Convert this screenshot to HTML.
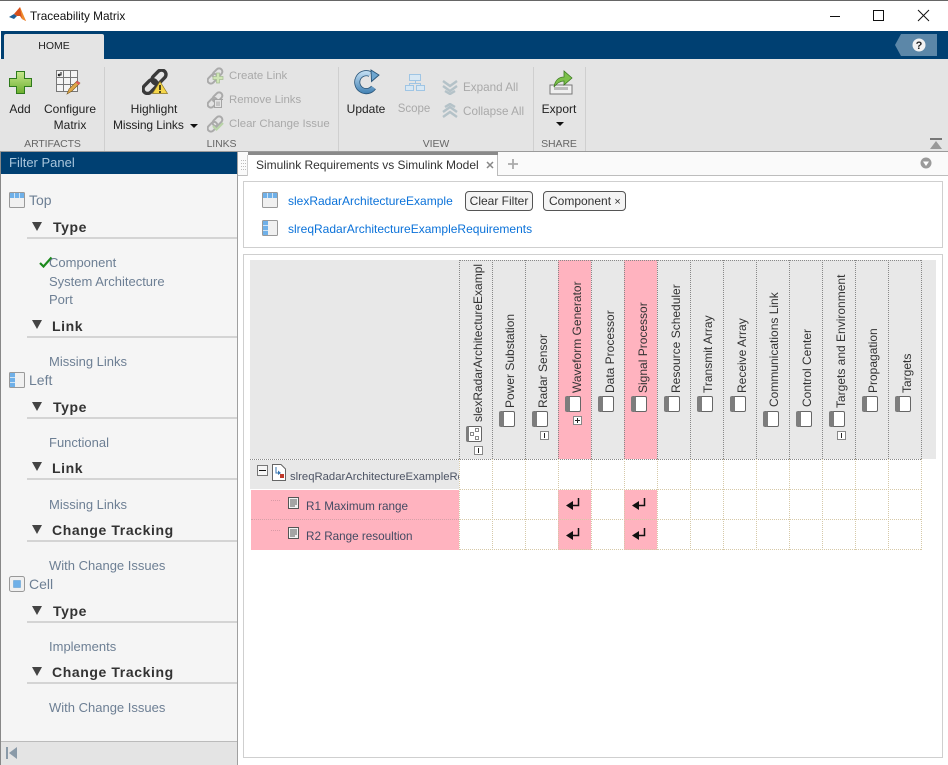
<!DOCTYPE html>
<html><head><meta charset="utf-8"><title>Traceability Matrix</title>
<style>
html,body{margin:0;padding:0;width:948px;height:765px;overflow:hidden;background:#fff}
body{position:relative;font-family:"Liberation Sans",sans-serif;font-size:12px;color:#222}
.a,.t,.v,.f,.h,.l{position:absolute}
.t{white-space:nowrap;line-height:16px}
.c{transform:translateX(-50%)}
.g{color:#a9a9a9;font-size:11.400px}
.sec{color:#666;font-size:10.500px;letter-spacing:-.1px}
.f{color:#6d7f94;font-size:13px;line-height:16px;white-space:nowrap}
.m{font-size:14px}
.h{color:#333;font-size:14px;font-weight:bold;line-height:16px;letter-spacing:.6px;white-space:nowrap}
.tri{position:absolute;left:32px;width:0;height:0;border-left:5px solid transparent;border-right:5px solid transparent;border-top:9px solid #444}
.rule{position:absolute;left:27px;width:210px;height:2px;background:#d4d4d4}
.l{color:#0b72d9;font-size:12px;line-height:16px;white-space:nowrap}
.v{white-space:nowrap;font-size:12px;line-height:14px;color:#333;transform-origin:0 0;transform:rotate(-90deg)}
.colh{position:absolute;top:260px;height:199px;width:32px;border-left:1px dotted #888}
.vl{position:absolute;width:0;top:459px;height:91px;border-left:1px dotted #d6c9a8}
.hl{position:absolute;left:459px;width:462px;height:0;border-top:1px dotted #d6c9a8}
.pink{position:absolute;background:#ffb3bf}
.cmp{position:absolute;width:16px;height:16px;border:1px solid #666;border-left:5px solid #7d7d7d;border-radius:2px;background:#fff;box-sizing:border-box}
.pm{position:absolute;width:9px;height:9px;border:1px solid #888;background:#fff;box-sizing:border-box}
.pm:after{content:"";position:absolute;left:3px;top:1px;width:1px;height:5px;background:#222}
</style></head><body>

<!-- Title bar -->
<div class="a" style="left:0;top:0;width:948px;height:1px;background:#666"></div>
<svg class="a" style="left:9px;top:7px" width="17" height="17" viewBox="0 0 17 17"><path d="M0 10L5 7L8 9L5 12Z" fill="#1f5f96"/><path d="M5 7L11 0L14 8L17 14L13 12L11 9L8 9Z" fill="#d8501c"/><path d="M11 0L17 14L13 12Z" fill="#ee8a2c"/></svg>
<div class="t" style="left:30px;top:8px;font-size:11.800px;color:#111">Traceability Matrix</div>
<svg class="a" style="left:830px;top:9px" width="110" height="16" viewBox="0 0 110 16" fill="none" stroke="#111" stroke-width="1"><path d="M0 7.500H10"/><rect x="43.500" y="1.500" width="10" height="10"/><path d="M88 1L99 12M99 1L88 12"/></svg>

<!-- Blue band + ribbon -->
<div class="a" style="left:1px;top:31px;width:947px;height:28px;background:#004072"></div>
<div class="a" style="left:4px;top:34px;width:100px;height:25px;background:#e4e4e4;border-radius:2px 2px 0 0"></div>
<div class="t c" style="left:54px;top:38px;font-size:10.500px;color:#222">HOME</div>
<svg class="a" style="left:895px;top:34px" width="42" height="22" viewBox="0 0 42 22"><path d="M6 0H42V22H6L0 11Z" fill="#5c87a8"/><circle cx="24" cy="11" r="6.500" fill="#f2f2f2"/><text x="24" y="15" font-family="Liberation Sans" font-size="11" font-weight="bold" text-anchor="middle" fill="#222">?</text></svg>

<div class="a" style="left:0;top:59px;width:948px;height:92px;background:#e4e4e4"></div>
<div class="a" style="left:104px;top:67px;width:1px;height:84px;background:#cfcfcf"></div>
<div class="a" style="left:338px;top:67px;width:1px;height:84px;background:#cfcfcf"></div>
<div class="a" style="left:533px;top:67px;width:1px;height:84px;background:#cfcfcf"></div>
<div class="a" style="left:585px;top:67px;width:1px;height:84px;background:#cfcfcf"></div>

<svg class="a" style="left:9px;top:71px" width="23" height="23" viewBox="0 0 23 23"><defs><linearGradient id="gr" x1="0" y1="0" x2="0" y2="1"><stop offset="0" stop-color="#c9e88e"/><stop offset="1" stop-color="#6cae2e"/></linearGradient></defs><path d="M7.500.5H15.500V7.500H22.500V15.500H15.500V22.500H7.500V15.500H.5V7.500H7.500Z" fill="url(#gr)" stroke="#2f7a1c"/></svg>
<svg class="a" style="left:55px;top:69px" width="26" height="26" viewBox="0 0 26 26"><rect x="1.500" y="1.500" width="21" height="21" fill="#f4f4f4" stroke="#777"/><path d="M8.500 1V22M15.500 1V22M1 8.500H22M1 15.500H22" stroke="#777"/><path d="M6 3V6H3M3 6L4.500 4.800M3 6L4.500 7.200" stroke="#111" fill="none"/><path d="M12 25L14 20L22 12L25 14L17 22Z" fill="#e0a848" stroke="#7a5a20" stroke-width=".6"/><path d="M22 12L25 14L24 16L20.500 13.500Z" fill="#e05a5a"/></svg>
<div class="t c" style="left:20px;top:101px">Add</div>
<div class="t c" style="left:70px;top:101px">Configure</div>
<div class="t c" style="left:70px;top:117px">Matrix</div>
<div class="t c sec" style="left:52.500px;top:136px">ARTIFACTS</div>

<svg class="a" style="left:142px;top:69px" width="28" height="26" viewBox="0 0 28 26" fill="none"><rect x="0" y="13" width="16" height="9" rx="4.500" stroke="#3a3a3a" stroke-width="3.400" transform="rotate(-45 8 17.500)"/><rect x="9" y="3.500" width="16" height="9" rx="4.500" stroke="#3a3a3a" stroke-width="3.400" transform="rotate(-45 17 8)"/><path d="M18 12.500L25.500 24.500H10.500Z" fill="#f5d64a" stroke="#8a7420" stroke-width=".7"/><path d="M18 16V21M18 22V24" stroke="#111" stroke-width="1.500"/></svg>
<div class="t c" style="left:154px;top:101px">Highlight</div>
<div class="t" style="left:113px;top:117px;letter-spacing:-.1px">Missing Links</div>
<div class="a" style="left:190px;top:124px;width:0;height:0;border-left:4px solid transparent;border-right:4px solid transparent;border-top:4px solid #111"></div>

<svg class="a" style="left:207px;top:67px" width="20" height="18" viewBox="0 0 20 18" fill="none"><rect x="0" y="8.500" width="11" height="6.500" rx="3.200" stroke="#aaa" stroke-width="2" transform="rotate(-45 5.500 11.750)"/><rect x="5" y="3" width="11" height="6.500" rx="3.200" stroke="#aaa" stroke-width="2" transform="rotate(-45 10.500 6.250)"/><path d="M9.500 6H12.500V9.500H16V12.500H12.500V16H9.500V12.500H6V9.500H9.500Z" fill="#cfe6b5" stroke="#a5bb92" stroke-width=".7"/></svg>
<svg class="a" style="left:207px;top:91px" width="20" height="18" viewBox="0 0 20 18" fill="none"><rect x="0" y="8.500" width="11" height="6.500" rx="3.200" stroke="#aaa" stroke-width="2" transform="rotate(-45 5.500 11.750)"/><rect x="5" y="3" width="11" height="6.500" rx="3.200" stroke="#aaa" stroke-width="2" transform="rotate(-45 10.500 6.250)"/><path d="M7 8.500H15V16.500H7Z" fill="#e4e4e4"/><path d="M6 8.500H16M7.500 9V16.500H14.500V9M10 10.500V15M12 10.500V15" stroke="#a5a5a5"/></svg>
<svg class="a" style="left:207px;top:115px" width="20" height="18" viewBox="0 0 20 18" fill="none"><rect x="0" y="8.500" width="11" height="6.500" rx="3.200" stroke="#aaa" stroke-width="2" transform="rotate(-45 5.500 11.750)"/><rect x="5" y="3" width="11" height="6.500" rx="3.200" stroke="#aaa" stroke-width="2" transform="rotate(-45 10.500 6.250)"/><path d="M6 11L9.500 14.500L16 8" stroke="#b9d4a8" stroke-width="2.200"/></svg>
<div class="t g" style="left:229px;top:68px">Create Link</div>
<div class="t g" style="left:229px;top:92px">Remove Links</div>
<div class="t g" style="left:229px;top:116px">Clear Change Issue</div>
<div class="t c sec" style="left:221.500px;top:136px">LINKS</div>

<svg class="a" style="left:354px;top:69px" width="26" height="26" viewBox="0 0 26 26" fill="none"><defs><linearGradient id="bl" gradientUnits="userSpaceOnUse" x1="0" y1="2" x2="0" y2="25"><stop offset="0" stop-color="#c4e0f4"/><stop offset="1" stop-color="#3f7fb2"/></linearGradient></defs><path d="M19.500 18.500A9 9 0 1 1 16 5" stroke="#2a5578" stroke-width="6"/><path d="M19.500 18.500A9 9 0 1 1 16 5" stroke="url(#bl)" stroke-width="4.400"/><path d="M17 1L25 6L17.500 12.500Z" fill="#6ea6d0" stroke="#2a5578" stroke-width=".9"/></svg>
<div class="t c" style="left:366px;top:101px">Update</div>
<svg class="a" style="left:404px;top:73px" width="24" height="20" viewBox="0 0 24 20" fill="#d8e8f4" stroke="#9fc5e4"><rect x="5.500" y="1.500" width="11" height="6"/><rect x="1.500" y="12.500" width="8" height="5"/><rect x="12.500" y="12.500" width="8" height="5"/><path d="M11.500 7.500V10.500M5.500 12.500V10.500H16.500V12.500" fill="none"/></svg>
<div class="t c g" style="left:414px;top:101px;font-size:11.500px">Scope</div>
<svg class="a" style="left:441px;top:79px" width="18" height="16" viewBox="0 0 18 16" fill="none" stroke="#b4c2c8" stroke-width="2.400"><path d="M2 2L9 7L16 2M2 7L9 12L16 7M4 12L9 15L14 12"/></svg>
<svg class="a" style="left:441px;top:103px" width="18" height="16" viewBox="0 0 18 16" fill="none" stroke="#b4c2c8" stroke-width="2.400"><path d="M2 14L9 9L16 14M2 9L9 4L16 9M4 4L9 1L14 4"/></svg>
<div class="t g" style="left:463px;top:80px;font-size:11.700px">Expand All</div>
<div class="t g" style="left:463px;top:104px;font-size:11.700px">Collapse All</div>
<div class="t c sec" style="left:436px;top:136px">VIEW</div>

<svg class="a" style="left:548px;top:69px" width="26" height="26" viewBox="0 0 26 26"><path d="M2 16H24V25H2Z" fill="#f0f0f0" stroke="#777"/><rect x="6" y="18" width="14" height="3" fill="#bbb"/><path d="M6 18C7 11 11 8 16 8V2L24 9L16 16V12C12 12 9 14 6 18Z" fill="#7cc04a" stroke="#3d7a22" stroke-width=".8"/></svg>
<div class="t c" style="left:559px;top:101px">Export</div>
<div class="a" style="left:556px;top:122px;width:0;height:0;border-left:4px solid transparent;border-right:4px solid transparent;border-top:4px solid #111"></div>
<div class="t c sec" style="left:559px;top:136px">SHARE</div>
<svg class="a" style="left:929px;top:138px" width="14" height="11" viewBox="0 0 14 11"><rect x="1" y="0" width="12" height="2" fill="#777"/><path d="M7 3L13 11H1Z" fill="#999"/></svg>
<div class="a" style="left:0;top:151px;width:948px;height:1px;background:#9a9a9a"></div>

<!-- Filter panel -->
<div class="a" style="left:0;top:152px;width:1px;height:613px;background:#888"></div>
<div class="a" style="left:1px;top:152px;width:237px;height:22px;background:#004072"></div>
<div class="t" style="left:9px;top:155px;font-size:13px;color:#a9c6dc">Filter Panel</div>
<div class="a" style="left:1px;top:174px;width:236px;height:567px;background:#f5f5f5"></div>
<div class="a" style="left:237px;top:152px;width:1px;height:613px;background:#a0a0a0"></div>
<div class="a" style="left:1px;top:741px;width:236px;height:24px;background:#e4e4e4;border-top:1px solid #bbb;box-sizing:border-box"></div>
<svg class="a" style="left:6px;top:747px" width="12" height="13" viewBox="0 0 12 13"><rect x="0" y="0" width="2" height="12" fill="#8a9aa8"/><path d="M11 0V12L3 6Z" fill="#8a9aa8"/></svg>

<svg class="a" style="left:9px;top:192px" width="16" height="16" viewBox="0 0 16 16"><rect x=".5" y=".5" width="15" height="15" rx="1" fill="#f0f0f0" stroke="#999"/><rect x="1" y="1" width="14" height="5" fill="#6fb0e8"/><path d="M5.500 1V6M10.500 1V6" stroke="#cfe4f6"/></svg>
<div class="f m" style="left:29px;top:192px">Top</div>
<div class="tri" style="top:222px"></div><div class="h" style="left:53px;top:219px">Type</div><div class="rule" style="top:237px"></div>
<svg class="a" style="left:39px;top:256px" width="14" height="12" viewBox="0 0 14 12" fill="none"><path d="M1 7L4.500 10.500L12.500 1.500" stroke="#1c8a1c" stroke-width="2.200"/></svg>
<div class="f" style="left:49px;top:255px">Component</div>
<div class="f" style="left:49px;top:274px">System Architecture</div>
<div class="f" style="left:49px;top:292px">Port</div>
<div class="tri" style="top:320px"></div><div class="h" style="left:52px;top:318px">Link</div><div class="rule" style="top:336px"></div>
<div class="f" style="left:49px;top:354px">Missing Links</div>

<svg class="a" style="left:9px;top:372px" width="16" height="16" viewBox="0 0 16 16"><rect x=".5" y=".5" width="15" height="15" rx="1" fill="#f0f0f0" stroke="#999"/><rect x="1" y="1" width="5" height="14" fill="#6fb0e8"/><path d="M1 5.500H6M1 10.500H6" stroke="#cfe4f6"/></svg>
<div class="f m" style="left:29px;top:372px">Left</div>
<div class="tri" style="top:402px"></div><div class="h" style="left:53px;top:399px">Type</div><div class="rule" style="top:417px"></div>
<div class="f" style="left:49px;top:435px">Functional</div>
<div class="tri" style="top:462px"></div><div class="h" style="left:52px;top:460px">Link</div><div class="rule" style="top:478px"></div>
<div class="f" style="left:49px;top:497px">Missing Links</div>
<div class="tri" style="top:525px"></div><div class="h" style="left:52px;top:522px">Change Tracking</div><div class="rule" style="top:540px"></div>
<div class="f" style="left:49px;top:558px">With Change Issues</div>

<svg class="a" style="left:9px;top:576px" width="16" height="16" viewBox="0 0 16 16"><rect x=".5" y=".5" width="15" height="15" rx="2" fill="#f0f0f0" stroke="#999"/><rect x="4.500" y="4.500" width="7" height="7" fill="#6fb0e8" stroke="#5a9ad0" stroke-width=".5"/></svg>
<div class="f m" style="left:29px;top:576px">Cell</div>
<div class="tri" style="top:606px"></div><div class="h" style="left:53px;top:603px">Type</div><div class="rule" style="top:621px"></div>
<div class="f" style="left:49px;top:639px">Implements</div>
<div class="tri" style="top:667px"></div><div class="h" style="left:52px;top:664px">Change Tracking</div><div class="rule" style="top:682px"></div>
<div class="f" style="left:49px;top:700px">With Change Issues</div>

<!-- Tab strip -->
<div class="a" style="left:238px;top:152px;width:710px;height:23px;background:#fafafa"></div>
<div class="a" style="left:238px;top:175px;width:710px;height:1px;background:#bdbdbd"></div>
<svg class="a" style="left:240px;top:159px" width="7" height="14"><path d="M1 1.500H6M1 4.500H6M1 7.500H6M1 10.500H6" stroke="#bbb" stroke-dasharray="1 1"/></svg>
<div class="a" style="left:248px;top:152px;width:250px;height:3px;background:#8a8a8a"></div>
<div class="a" style="left:247px;top:155px;width:251px;height:21px;background:#fff;border-left:1px solid #ccc;border-right:1px solid #bbb;box-sizing:border-box"></div>
<div class="t" style="left:256px;top:157px;color:#333;font-size:12px;letter-spacing:-.02px">Simulink Requirements vs Simulink Model</div>
<svg class="a" style="left:486px;top:161px" width="8" height="8"><path d="M1 1L7 7M7 1L1 7" stroke="#888" stroke-width="1.500"/></svg>
<svg class="a" style="left:508px;top:159px" width="10" height="10"><path d="M5 0V10M0 5H10" stroke="#aaa" stroke-width="1.800"/></svg>
<svg class="a" style="left:920px;top:157px" width="12" height="12" viewBox="0 0 12 12"><circle cx="6" cy="6" r="5.500" fill="#9a9a9a"/><path d="M3 4.500H9L6 9Z" fill="#fff"/></svg>

<!-- Top info box -->
<div class="a" style="left:243px;top:181px;width:700px;height:67px;border:1px solid #cfcfcf;box-sizing:border-box;background:#fff"></div>
<svg class="a" style="left:262px;top:192px" width="16" height="16" viewBox="0 0 16 16"><rect x=".5" y=".5" width="15" height="15" rx="1" fill="#f0f0f0" stroke="#999"/><rect x="1" y="1" width="14" height="5" fill="#6fb0e8"/><path d="M5.500 1V6M10.500 1V6" stroke="#cfe4f6"/></svg>
<div class="l" style="left:288px;top:193px">slexRadarArchitectureExample</div>
<div class="t" style="left:465px;top:191px;width:68px;height:20px;border:1px solid #555;border-radius:4px;background:#f4f4f4;box-sizing:border-box;text-align:center;line-height:18px;color:#333">Clear Filter</div>
<div class="t" style="left:543px;top:191px;width:83px;height:20px;border:1px solid #555;border-radius:4px;background:#f4f4f4;box-sizing:border-box;padding-left:5px;line-height:18px;color:#333">Component <span style="font-size:11px">×</span></div>
<svg class="a" style="left:262px;top:220px" width="16" height="16" viewBox="0 0 16 16"><rect x=".5" y=".5" width="15" height="15" rx="1" fill="#f0f0f0" stroke="#999"/><rect x="1" y="1" width="5" height="14" fill="#6fb0e8"/><path d="M1 5.500H6M1 10.500H6" stroke="#cfe4f6"/></svg>
<div class="l" style="left:288px;top:221px">slreqRadarArchitectureExampleRequirements</div>

<!-- Matrix box -->
<div class="a" style="left:243px;top:254px;width:700px;height:504px;border:1px solid #cfcfcf;box-sizing:border-box;background:#fff"></div>
<div class="a" style="left:250px;top:260px;width:686px;height:199px;background:#e8e8e8"></div>
<div class="pink" style="left:558px;top:260px;width:33px;height:199px"></div>
<div class="pink" style="left:624px;top:260px;width:33px;height:199px"></div>
<div class="a" style="left:250px;top:460px;width:209px;height:29px;background:#e8e8e8"></div>
<div class="pink" style="left:251px;top:490px;width:208px;height:60px"></div>
<div class="pink" style="left:558px;top:490px;width:33px;height:60px"></div>
<div class="pink" style="left:624px;top:490px;width:33px;height:60px"></div>

<!-- header dotted -->
<div class="colh" style="left:459px"></div><div class="colh" style="left:492px"></div><div class="colh" style="left:525px"></div><div class="colh" style="left:558px"></div><div class="colh" style="left:591px"></div><div class="colh" style="left:624px"></div><div class="colh" style="left:657px"></div><div class="colh" style="left:690px"></div><div class="colh" style="left:723px"></div><div class="colh" style="left:756px"></div><div class="colh" style="left:789px"></div><div class="colh" style="left:822px"></div><div class="colh" style="left:855px"></div><div class="colh" style="left:888px"></div><div class="colh" style="left:921px;width:0"></div>
<div class="a" style="left:250px;top:459px;width:671px;height:0;border-top:1px dotted #888"></div>
<div class="a" style="left:459px;top:260px;width:462px;height:0;border-top:1px dotted #888"></div>

<!-- body grid -->
<div class="vl" style="left:459px"></div><div class="vl" style="left:492px"></div><div class="vl" style="left:525px"></div><div class="vl" style="left:558px"></div><div class="vl" style="left:591px"></div><div class="vl" style="left:624px"></div><div class="vl" style="left:657px"></div><div class="vl" style="left:690px"></div><div class="vl" style="left:723px"></div><div class="vl" style="left:756px"></div><div class="vl" style="left:789px"></div><div class="vl" style="left:822px"></div><div class="vl" style="left:855px"></div><div class="vl" style="left:888px"></div><div class="vl" style="left:921px"></div>
<div class="hl" style="top:489px"></div><div class="hl" style="top:519px"></div><div class="hl" style="top:549px"></div>
<div class="a" style="left:251px;top:519px;width:208px;height:0;border-top:1px dotted #d6a0a8"></div>

<!-- Column labels -->
<div class="a" style="left:460px;top:264px;width:31px;height:160px;overflow:hidden"><div class="v" style="left:11px;top:158px">slexRadarArchitectureExample</div></div>
<div class="v" style="left:503px;top:408px">Power Substation</div>
<div class="v" style="left:536px;top:408px">Radar Sensor</div>
<div class="v" style="left:570px;top:393px">Waveform Generator</div>
<div class="v" style="left:603px;top:393px">Data Processor</div>
<div class="v" style="left:636px;top:393px">Signal Processor</div>
<div class="v" style="left:669px;top:393px">Resource Scheduler</div>
<div class="v" style="left:701px;top:393px">Transmit Array</div>
<div class="v" style="left:735px;top:393px">Receive Array</div>
<div class="v" style="left:767px;top:407px">Communications Link</div>
<div class="v" style="left:800px;top:407px">Control Center</div>
<div class="v" style="left:834px;top:408px">Targets and Environment</div>
<div class="v" style="left:866px;top:393px">Propagation</div>
<div class="v" style="left:900px;top:393px">Targets</div>

<!-- Component icons -->
<div class="cmp" style="left:466px;top:426px;border-left:3px solid #7d7d7d"></div>
<svg class="a" style="left:469px;top:428px" width="13" height="13"><g fill="none" stroke="#888"><rect x="6.500" y=".5" width="3" height="3"/><rect x="1.500" y="4.500" width="3" height="3"/><rect x="6.500" y="8.500" width="3" height="3"/></g></svg>
<div class="pm" style="left:474px;top:446px"></div>
<div class="cmp" style="left:499px;top:411px"></div>
<div class="cmp" style="left:532px;top:411px"></div>
<div class="pm" style="left:540px;top:431px"></div>
<div class="cmp" style="left:565px;top:396px"></div>
<div class="pm" style="left:573px;top:416px"></div>
<div class="a" style="left:575px;top:420px;width:5px;height:1px;background:#222"></div>
<div class="cmp" style="left:598px;top:396px"></div>
<div class="cmp" style="left:631px;top:396px"></div>
<div class="cmp" style="left:664px;top:396px"></div>
<div class="cmp" style="left:697px;top:396px"></div>
<div class="cmp" style="left:730px;top:396px"></div>
<div class="cmp" style="left:763px;top:411px"></div>
<div class="cmp" style="left:796px;top:411px"></div>
<div class="cmp" style="left:829px;top:411px"></div>
<div class="pm" style="left:837px;top:431px"></div>
<div class="cmp" style="left:862px;top:396px"></div>
<div class="cmp" style="left:895px;top:396px"></div>

<!-- Row headers -->
<div class="a" style="left:257px;top:465px;width:11px;height:11px;border:1px solid #777;background:#f5f5f5;box-sizing:border-box"></div>
<div class="a" style="left:259px;top:470px;width:7px;height:1px;background:#111"></div>
<svg class="a" style="left:272px;top:464px" width="14" height="17" viewBox="0 0 14 17"><path d="M.5.5H9L13.500 5V16.500H.5Z" fill="#fff" stroke="#666"/><path d="M4 3V9H8" stroke="#3573b0" fill="none"/><path d="M6 6.500L9 9L6 11Z" fill="#3573b0"/><rect x="8" y="10" width="4" height="4" fill="#c0392b"/></svg>
<div class="a" style="left:290px;top:469px;width:169px;overflow:hidden"><div style="white-space:nowrap;line-height:16px;color:#4d5464;font-size:11.300px">slreqRadarArchitectureExampleRequirements</div></div>
<div class="a" style="left:271px;top:500px;width:9px;height:0;border-top:1px dotted #d99aa6"></div>
<div class="a" style="left:271px;top:530px;width:9px;height:0;border-top:1px dotted #d99aa6"></div>
<svg class="a" style="left:288px;top:497px" width="11" height="13" viewBox="0 0 11 13"><rect x=".5" y=".5" width="10" height="11" fill="#f2f2f2" stroke="#555"/><path d="M2 3H9M2 5H9M2 7H9M2 9H7" stroke="#555"/></svg>
<svg class="a" style="left:288px;top:527px" width="11" height="13" viewBox="0 0 11 13"><rect x=".5" y=".5" width="10" height="11" fill="#f2f2f2" stroke="#555"/><path d="M2 3H9M2 5H9M2 7H9M2 9H7" stroke="#555"/></svg>
<div class="t" style="left:306px;top:499px;font-size:11.700px;color:#444b63">R1 Maximum range</div>
<div class="t" style="left:306px;top:529px;font-size:11.700px;color:#444b63">R2 Range resoultion</div>

<!-- Link arrows -->
<svg class="a" style="left:566px;top:498px" width="14" height="13" viewBox="0 0 14 13"><path d="M12.500 0V7.500H5" stroke="#111" stroke-width="1.500" fill="none"/><path d="M0 7.500L7 3V12Z" fill="#111"/></svg>
<svg class="a" style="left:566px;top:528px" width="14" height="13" viewBox="0 0 14 13"><path d="M12.500 0V7.500H5" stroke="#111" stroke-width="1.500" fill="none"/><path d="M0 7.500L7 3V12Z" fill="#111"/></svg>
<svg class="a" style="left:632px;top:498px" width="14" height="13" viewBox="0 0 14 13"><path d="M12.500 0V7.500H5" stroke="#111" stroke-width="1.500" fill="none"/><path d="M0 7.500L7 3V12Z" fill="#111"/></svg>
<svg class="a" style="left:632px;top:528px" width="14" height="13" viewBox="0 0 14 13"><path d="M12.500 0V7.500H5" stroke="#111" stroke-width="1.500" fill="none"/><path d="M0 7.500L7 3V12Z" fill="#111"/></svg>

</body></html>
